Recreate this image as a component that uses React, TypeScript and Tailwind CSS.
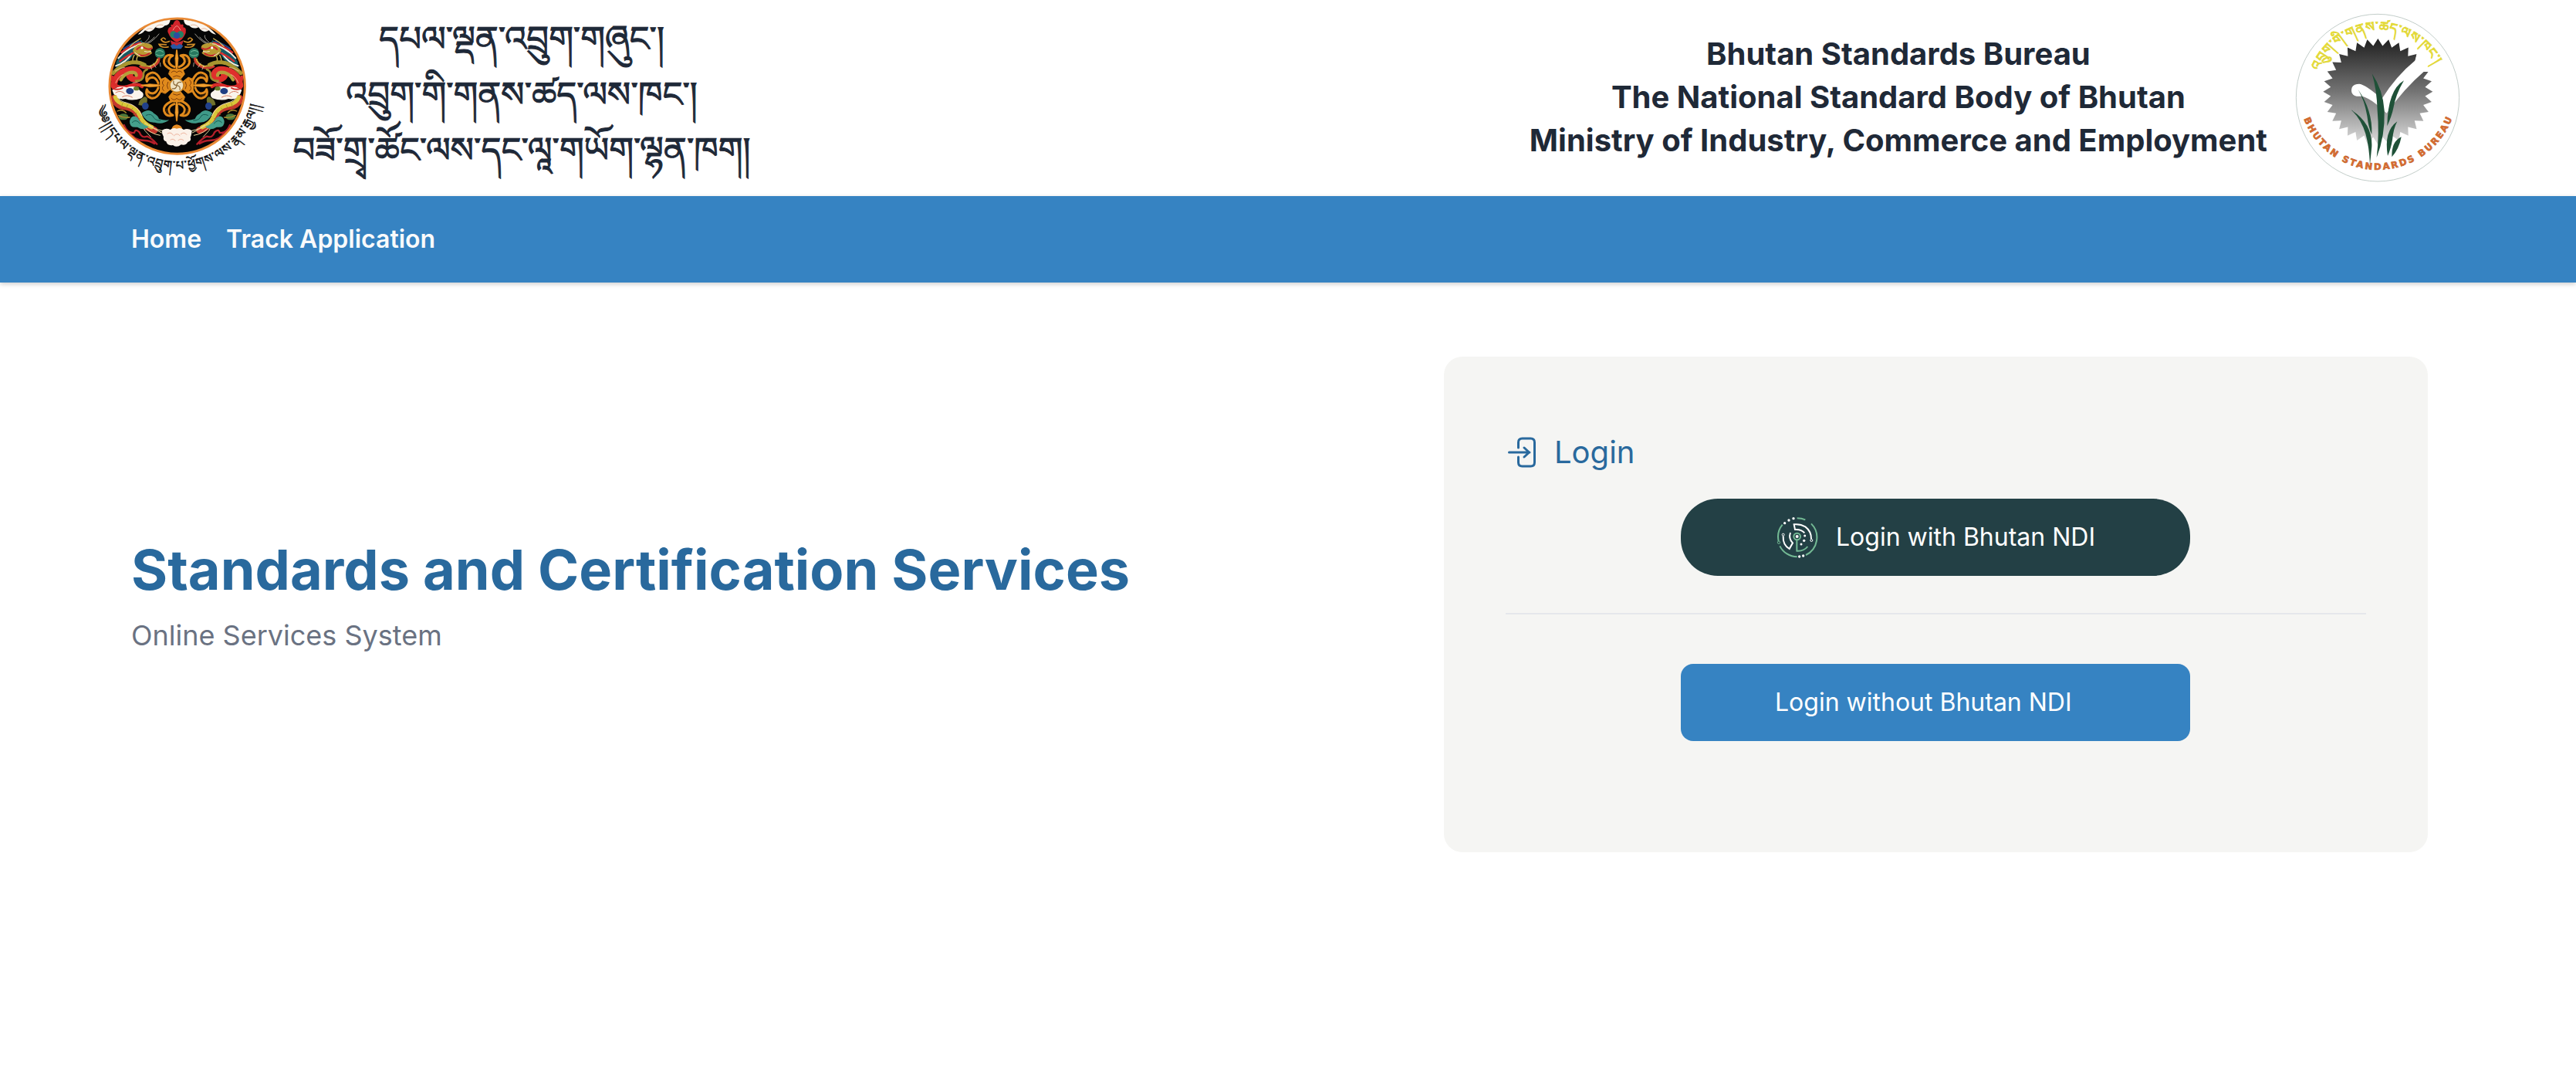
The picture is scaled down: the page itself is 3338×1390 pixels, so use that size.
import React from 'react';

const TIB = '"Noto Serif Tibetan", "Jomolhari", "Noto Sans Tibetan", Inter, serif';

function DragonHalf() {
  return (
    <g fill="none" strokeLinecap="round" strokeLinejoin="round">
      {/* clouds along the upper rim */}
      <path d="M236 134 Q262 104 300 86 Q330 76 362 74 Q362 98 340 100 Q326 116 304 106 Q286 132 264 118 Q250 134 236 134Z" fill="#fbf6ef" />
      <path d="M268 118 q12 -14 26 -4 M306 104 q12 -12 28 -6" stroke="#d99a78" strokeWidth="2" />
      {/* mane */}
      <path d="M152 240 Q176 192 250 156 L262 176 Q226 196 206 230 Q186 262 150 272Z" fill="#175a63" />
      <path d="M160 226 Q196 184 258 168 M150 256 Q190 244 212 208" stroke="#f3ece0" strokeWidth="6" />
      <path d="M172 204 Q206 176 246 166 M166 238 Q196 214 232 200" stroke="#d92b2b" strokeWidth="7" />
      <path d="M180 190 Q204 172 238 160" stroke="#22418a" strokeWidth="6" />
      <path d="M254 178 Q290 168 318 132 M258 172 Q290 160 300 144 M262 166 Q284 148 280 138" stroke="#e9e4d8" strokeWidth="2" />
      <path d="M206 180 Q226 160 246 150 M222 214 Q212 232 218 246 M234 220 Q228 236 236 244" stroke="#d8c05a" strokeWidth="4" />
      {/* head */}
      <path d="M216 196 Q232 160 268 168 Q296 170 294 188 Q280 194 292 206 Q272 224 246 222 Q224 220 216 196Z" fill="#b89a32" />
      <path d="M232 192 q14 -16 30 -6 q16 10 28 2 M240 212 q18 10 40 -4" stroke="#c7262b" strokeWidth="6" />
      <path d="M226 180 q10 -12 24 -10 M262 200 q12 4 24 0 M224 204 q10 10 20 12" stroke="#f4ecd8" strokeWidth="3" />
      <circle cx="252" cy="186" r="5" fill="#fff" />
      <circle cx="322" cy="207" r="20" fill="#27795f" />
      <path d="M306 202 q14 -12 28 0 M308 212 q16 10 28 0" stroke="#7ec5a3" strokeWidth="3" />
      <path d="M318 228 Q318 250 286 262 Q264 268 246 258" stroke="#c93a2c" strokeWidth="10" />
      <path d="M312 230 Q308 248 282 258 L250 254" stroke="#d4a63c" strokeWidth="6" strokeDasharray="4 4" />
      <path d="M296 246 l10 16 M284 254 l6 16 M322 244 l2 14" stroke="#efe6cf" strokeWidth="2" />
      {/* coiled body */}
      <path d="M142 332 Q150 284 196 272 Q238 262 244 290 Q244 316 214 306 Q196 296 206 288" stroke="#df2f2c" strokeWidth="24" />
      <path d="M170 310 Q182 288 204 282 Q230 278 230 294" stroke="#b5a03a" strokeWidth="13" strokeDasharray="5 3" />
      <path d="M136 300 Q142 350 196 336 Q236 322 252 336" stroke="#d92c2a" strokeWidth="13" />
      <path d="M140 284 Q166 258 196 246 Q232 236 262 252" stroke="#a8952f" strokeWidth="15" strokeDasharray="6 3" />
      <path d="M150 322 Q160 296 178 290 M216 322 Q240 322 252 304 M148 276 Q168 262 184 262" stroke="#f3c9a0" strokeWidth="2.500" />
      <path d="M228 314 Q256 316 258 292 Q256 276 272 270" stroke="#9c8a2e" strokeWidth="8" strokeDasharray="4 3" />
      <path d="M136 350 q30 -20 56 -10 q36 -12 52 12 q24 14 6 30 q-36 12 -62 2 q-40 8 -52 -34Z" fill="#faf4ec" />
      <path d="M150 360 q20 -12 34 4 M176 376 q20 -10 38 2" stroke="#d77a62" strokeWidth="3" />
      <path d="M138 344 Q160 352 176 342" stroke="#d92c2a" strokeWidth="6" />
      <ellipse cx="205" cy="354" rx="15" ry="12" fill="#203f83" />
      <ellipse cx="230" cy="344" rx="11" ry="8" fill="#6b7d2c" />
      {/* tail */}
      <path d="M144 382 Q150 410 186 414 Q230 420 240 454 Q252 488 300 506" stroke="#c5382c" strokeWidth="27" strokeDasharray="6 3" />
      <path d="M148 378 Q156 402 190 408 Q232 418 246 454 Q258 482 290 494" stroke="#d8c63a" strokeWidth="16" />
      <path d="M176 402 l-4 14 M196 408 l-6 14 M216 420 l-10 12 M232 438 l-14 8 M244 460 l-14 6 M258 478 l-12 10" stroke="#8f8422" strokeWidth="2" />
      <path d="M154 374 Q164 394 194 400 Q236 410 252 450" stroke="#fbf3d0" strokeWidth="2.500" />
      <path d="M264 478 Q290 500 330 508 M258 486 Q280 520 322 526 M248 484 Q262 510 286 532 M280 486 Q304 506 328 516" stroke="#e9d9a0" strokeWidth="3" />
      <path d="M238 408 Q240 388 254 382 q10 -12 18 0 q4 20 -12 30Z" fill="#71722c" />
      <ellipse cx="265" cy="412" rx="13" ry="14" fill="#21408a" />
      <ellipse cx="180" cy="454" rx="19" ry="12" fill="#4d7a3a" />
      <path d="M156 432 q20 -10 34 6 M160 448 q20 12 44 8" stroke="#b08b2c" strokeWidth="4" />
      {/* teal clouds */}
      <path d="M204 470 q8 -28 30 -14 q12 26 44 36 q-18 18 -44 2 q-32 4 -30 -24Z" fill="#45a08c" />
      <path d="M250 440 q28 -22 48 0 q18 10 20 22 q22 8 40 4 q-26 20 -56 10 q-34 2 -52 -36Z" fill="#3f9a88" />
      <path d="M268 448 q22 -10 30 10 q10 12 26 10 M214 476 q14 -16 30 4" stroke="#175c52" strokeWidth="3" />
      {/* red scrolls */}
      <path d="M182 486 Q196 520 222 516 Q226 498 242 514 Q250 538 272 530 Q288 536 310 560 M200 510 Q220 546 262 546 Q282 546 300 558" stroke="#b51f2a" strokeWidth="7" />
    </g>
  );
}

function VajraArm() {
  return (
    <g fill="none" stroke="#e08a1c" strokeLinecap="round" strokeLinejoin="round">
      <path d="M387 198 V300" strokeWidth="7" />
      <path d="M381 226 L387 192 L393 226 L390 262 H384Z" fill="#f0a030" strokeWidth="2" />
      <path d="M366 270 Q332 254 338 232 Q346 208 372 216 Q356 222 356 240 Q360 254 378 260" strokeWidth="9" />
      <path d="M408 270 Q442 254 436 232 Q428 208 402 216 Q418 222 418 240 Q414 254 396 260" strokeWidth="9" />
      <path d="M364 268 H410 L418 288 L402 308 H372 L356 288Z" fill="#e08a1c" strokeWidth="3" />
      <path d="M366 282 q10 -12 21 0 q11 -12 21 0 M374 298 q12 -8 26 0" stroke="#7c3d0c" strokeWidth="3" />
      <path d="M346 240 q-2 -12 10 -18 M428 240 q2 -12 -10 -18" stroke="#8a4a10" strokeWidth="2" />
    </g>
  );
}

function Emblem() {
  return (
    <svg viewBox="0 0 780 750" className="h-[250px] w-[260px] shrink-0 overflow-visible" aria-label="Emblem of Bhutan">
      <defs>
        <clipPath id="disc"><circle cx="389" cy="335" r="260" /></clipPath>
        <path id="emblemArc" d="M74 415 A325 325 0 0 0 708 397" />
      </defs>
      <circle cx="389" cy="335" r="263" fill="#060606" stroke="#ea8a35" strokeWidth="9" />
      <g clipPath="url(#disc)">
        <DragonHalf />
        <g transform="translate(776 0) scale(-1 1)"><DragonHalf /></g>
        {/* flaming jewel */}
        <path d="M352 124 Q352 104 366 104 Q360 92 372 96 Q378 78 388 78 Q398 78 402 96 Q416 90 412 106 Q426 106 422 128 Q410 158 387 164 Q364 156 352 124Z" fill="#d2252c" />
        <path d="M372 118 q6 -14 16 -18 q10 6 14 18" fill="none" stroke="#f2948b" strokeWidth="3" />
        <circle cx="374" cy="134" r="13" fill="#258065" />
        <circle cx="401" cy="134" r="13" fill="#258065" />
        <circle cx="387" cy="138" r="12" fill="#2a4fa0" />
        <path d="M362 156 Q387 172 414 156 L404 184 H370Z" fill="#be2632" />
        <path d="M362 178 l14 -8 10 8 12 -8 14 8 -8 12 h-34Z" fill="#2857a3" />
        <path d="M360 160 q-22 12 -34 -6 q10 -14 18 0 M356 182 q-30 6 -38 -10 q18 0 30 2 M414 160 q22 12 34 -6 q-10 -14 -18 0 M418 182 q30 6 38 -10 q-18 0 -30 2" fill="none" stroke="#cf8c28" strokeWidth="5" />
        {/* crossed vajra */}
        <VajraArm />
        <g transform="rotate(90 387 332)"><VajraArm /></g>
        <g transform="rotate(180 387 332)"><VajraArm /></g>
        <g transform="rotate(270 387 332)"><VajraArm /></g>
        <circle cx="387" cy="332" r="27" fill="#efe3c4" stroke="#c8811f" strokeWidth="5" />
        <path d="M387 332 q-16 -2 -12 -18 M387 332 q2 -16 18 -12 M387 332 q16 2 12 18 M387 332 q-2 16 -18 12" fill="none" stroke="#8d6b3a" strokeWidth="4" />
        {/* lotus */}
        <path d="M366 504 Q370 486 387 484 Q406 486 410 504Z" fill="#e58a22" />
        <path d="M330 506 Q346 496 362 504 Q374 494 387 500 Q402 494 414 504 Q430 496 446 508 Q444 528 440 534 Q446 548 430 552 Q424 566 404 562 Q388 576 372 564 Q350 568 346 550 Q332 546 336 532 Q328 520 330 506Z" fill="#fbf1e8" />
        <path d="M350 520 q14 -10 24 6 M376 528 q12 -14 24 0 M402 522 q14 -12 24 2 M362 544 q12 -8 20 4 M392 546 q12 -10 22 0" fill="none" stroke="#ebb09a" strokeWidth="3" />
      </g>
      <text fontFamily={TIB} fontSize="48" fill="#111" stroke="#111" strokeWidth="1.5">
        <textPath href="#emblemArc" textLength="865">༄༅།།དཔལ་ལྡན་འབྲུག་པ་ཕྱོགས་ལས་རྣམ་རྒྱལ།།</textPath>
      </text>
    </svg>
  );
}

const TEETH = Array.from({ length: 64 }, (_, i) => {
  const a = (i / 64) * Math.PI * 2 - Math.PI / 2;
  const r = i % 2 === 0 ? 1 : 0.865;
  return `${(364 + Math.cos(a) * 213 * r).toFixed(1)},${(356 + Math.sin(a) * 206 * r).toFixed(1)}`;
}).join(' ');

function BureauLogo() {
  return (
    <svg viewBox="0 0 750 750" className="h-[250px] w-[250px] shrink-0" aria-label="Bhutan Standards Bureau">
      <defs>
        <linearGradient id="gear" x1="0" y1="0" x2="0" y2="1">
          <stop offset="0" stopColor="#1f1f1f" />
          <stop offset="0.5" stopColor="#747474" />
          <stop offset="1" stopColor="#dedede" />
        </linearGradient>
        <path id="bottomArc" d="M76 462 A308 308 0 0 0 655 452" />
        <path id="topArc" d="M136 276 A247 247 0 0 1 591 267" />
      </defs>
      <ellipse cx="363" cy="380" rx="317" ry="325" fill="#fff" stroke="#a3b3ae" strokeWidth="2" />
      <polygon points={TEETH} fill="url(#gear)" />
      <path d="M261 352 Q261 326 292 326 Q318 330 379 384 Q436 294 510 234 L516 208 L600 200 L590 279 L542 279 Q466 344 398 440 Q330 376 300 374 Q262 378 261 352Z" fill="#fff" />
      <g fill="#1f5138">
        <path d="M341 286 Q384 350 389 430 Q392 530 359 612 Q370 520 362 430 Q360 350 341 286Z" />
        <path d="M287 348 Q344 430 340 522 Q328 500 322 450 Q312 390 287 348Z" />
        <path d="M260 427 Q344 480 340 570 L333 640 Q330 570 316 520 Q298 462 260 427Z" />
        <path d="M465 313 Q432 370 424 420 Q418 450 400 490 Q402 350 465 313Z" />
        <path d="M439 472 Q424 500 420 544 Q414 580 402 606 Q386 510 439 472Z" />
        <path d="M455 532 Q446 580 418 610 Q416 550 455 532Z" />
      </g>
      <text fontFamily='"DejaVu Sans", sans-serif' fontSize="35" fontWeight="700" fill="#df6c2e" stroke="#c0662f" strokeWidth="2">
        <textPath href="#bottomArc" textLength="744" lengthAdjust="spacing">BHUTAN STANDARDS BUREAU</textPath>
      </text>
      <text fontFamily={TIB} fontSize="52" fill="#f3ea3c" stroke="#e2d83a" strokeWidth="3">
        <textPath href="#topArc" textLength="560">འབྲུག་གི་གནས་ཚད་ལས་ཁང་།</textPath>
      </text>
    </svg>
  );
}

function NdiIcon() {
  return (
    <svg viewBox="38 26 162 162" className="h-[54px] w-[54px] shrink-0" fill="none" strokeWidth="6">
      <g stroke="#73b994">
        <path d="M118 33 Q136 33 150 39" />
        <path d="M173 54 A76 76 0 0 1 152 176" />
        <path d="M118 183 A76 76 0 0 1 51 141" />
        <path d="M61 58 A76 76 0 0 0 46 122" />
        <circle cx="47" cy="127" r="5" strokeWidth="3" />
        <circle cx="118" cy="104" r="13" />
        <path d="M117 118 V160 Q144 162 159 143" />
      </g>
      <g stroke="#fff">
        <path d="M173 114 Q174 84 150 66 Q130 54 106 57 L110 77 Q134 75 147 90" />
        <circle cx="174" cy="119" r="4.5" strokeWidth="3" />
        <path d="M64 102 Q62 136 88 152 L101 129 Q84 112 92 89" />
        <circle cx="64" cy="97" r="4.5" strokeWidth="3" />
      </g>
      <g fill="#fff">
        <circle cx="118" cy="104" r="6" />
        <circle cx="70" cy="52" r="5" /><circle cx="86" cy="41" r="5" /><circle cx="104" cy="34" r="5" />
        <circle cx="148" cy="101" r="4.5" /><circle cx="145" cy="120" r="5" /><circle cx="134" cy="134" r="4.5" />
        <circle cx="127" cy="182" r="5" /><circle cx="142" cy="179" r="5" />
      </g>
    </svg>
  );
}

function LoginIcon() {
  return (
    <svg viewBox="0 0 36 40" className="h-10 w-9 shrink-0" fill="none" stroke="currentColor" strokeWidth="3" strokeLinecap="round" strokeLinejoin="round">
      <path d="M13.5 14 V7 Q13.5 2 18.5 2 H29.500 Q34.500 2 34.500 7 V33 Q34.500 38 29.500 38 H18.500 Q13.500 38 13.500 33 V26" />
      <path d="M1.500 20 H28 M21 14 L27.500 20 L21 26" />
    </svg>
  );
}

export default function App() {
  return (
    <div className="flex min-h-[1390px] flex-col bg-white font-['Inter',sans-serif]">
      <header className="flex h-[254px] items-start justify-between pr-[128px] pl-[100px]">
        <div className="flex">
          <Emblem />
          <div
            className="w-[632px] pt-7 text-center text-[45px] leading-[72px] whitespace-nowrap text-gray-800 [-webkit-text-stroke:1px_#1f2937]"
            style={{ fontFamily: TIB }}
          >
            <p>དཔལ་ལྡན་འབྲུག་གཞུང་།</p>
            <p>འབྲུག་གི་གནས་ཚད་ལས་ཁང་།</p>
            <p>བཟོ་གྲྭ་ཚོང་ལས་དང་ལཱ་གཡོག་ལྷན་ཁག།</p>
          </div>
        </div>
        <div className="flex gap-[22px]">
          <div className="pt-[42px] text-center text-[40px] leading-[56px] font-bold whitespace-nowrap text-[#1f2937]">
            <p>Bhutan Standards Bureau</p>
            <p>The National Standard Body of Bhutan</p>
            <p>Ministry of Industry, Commerce and Employment</p>
          </div>
          <BureauLogo />
        </div>
      </header>
      <nav className="flex h-28 items-center gap-8 bg-[#3683c2] px-[170px] text-[32px] font-semibold text-gray-50 shadow-[0_2px_6px_rgba(0,0,0,0.2)]">
        <a>Home</a>
        <a>Track Application</a>
      </nav>
      <main className="flex items-start justify-between pt-24 pr-[192px] pl-[170px]">
        <section className="pt-[226px]">
          <h1 className="text-[72px] leading-[100px] font-bold text-[#29699d]">Standards and Certification Services</h1>
          <p className="mt-2.5 text-[36px] leading-[50px] text-gray-500">Online Services System</p>
        </section>
        <section className="flex h-[642px] w-[1275px] flex-col rounded-3xl bg-[#f5f5f3] px-20 pt-24">
          <h2 className="flex h-14 items-center gap-6 pl-[3px] text-[40px] text-[#29699d]">
            <LoginIcon />
            Login
          </h2>
          <button className="mt-8 mr-px flex h-[100px] w-[660px] items-center gap-[23px] self-center rounded-[48px] bg-[#234045] pl-[124px] text-[32px] text-white">
            <NdiIcon />
            Login with Bhutan NDI
          </button>
          <hr className="mt-12 border-t-2 border-gray-200" />
          <button className="mt-16 mr-px flex h-[100px] w-[660px] items-center self-center rounded-2xl bg-[#3683c2] pl-[122px] text-[32px] text-white">
            Login without Bhutan NDI
          </button>
        </section>
      </main>
    </div>
  );
}
